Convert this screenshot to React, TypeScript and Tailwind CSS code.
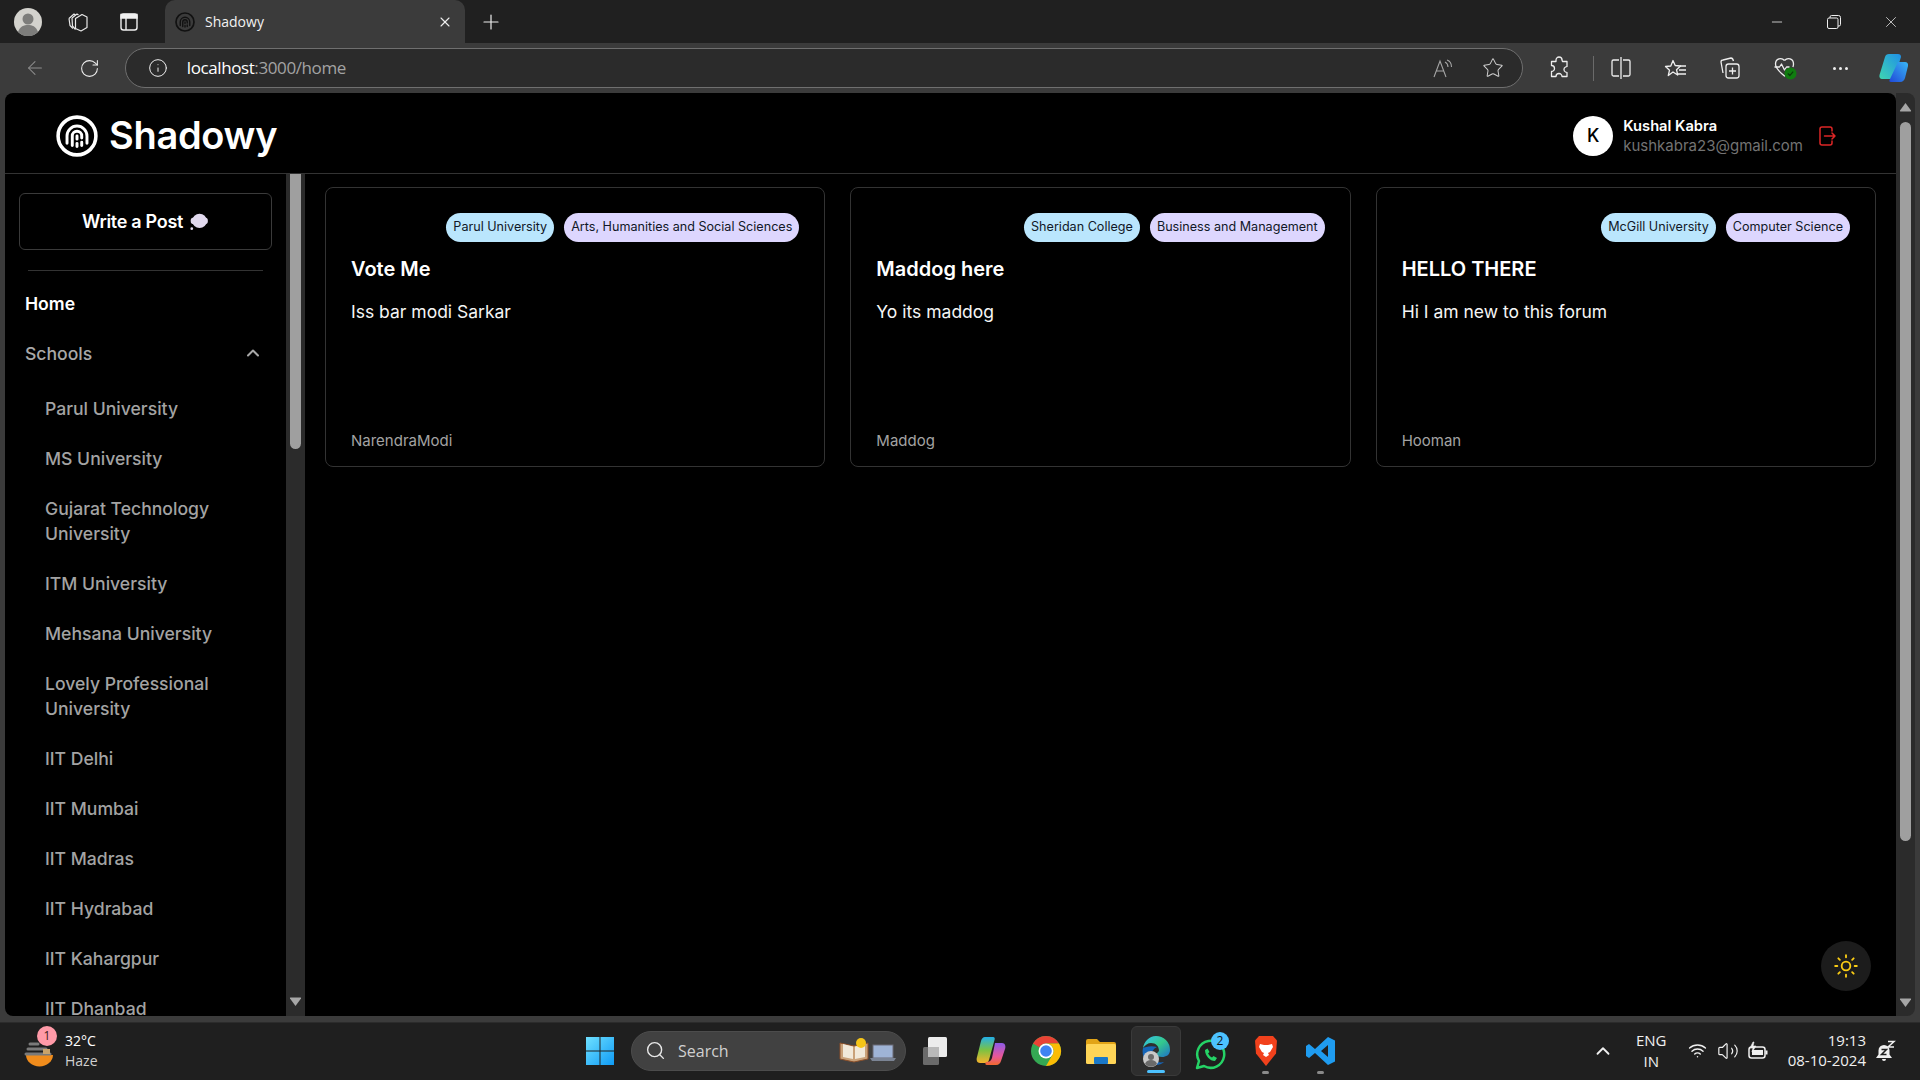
import { ArrowLeft, ChevronUp, Info, Minus, Plus, RotateCw, Search, Star, Sun, Volume2, Wifi, X } from "lucide-react";

const schools = [
  "Parul University",
  "MS University",
  "Gujarat Technology University",
  "ITM University",
  "Mehsana University",
  "Lovely Professional University",
  "IIT Delhi",
  "IIT Mumbai",
  "IIT Madras",
  "IIT Hydrabad",
  "IIT Kahargpur",
  "IIT Dhanbad",
];

const posts = [
  { school: "Parul University", field: "Arts, Humanities and Social Sciences", title: "Vote Me", body: "Iss bar modi Sarkar", author: "NarendraModi" },
  { school: "Sheridan College", field: "Business and Management", title: "Maddog here", body: "Yo its maddog", author: "Maddog" },
  { school: "McGill University", field: "Computer Science", title: "HELLO THERE", body: "Hi I am new to this forum", author: "Hooman" },
];

function Logo({ size, color }: { size: number; color: string }) {
  return (
    <svg width={size} height={size} viewBox="0 0 40 40" fill="none" stroke={color} strokeLinecap="round">
      <circle cx="20" cy="20" r="18" strokeWidth="3.4" />
      <path d="M10.500 27v-7a9.500 9.500 0 0 1 19 0v7" strokeWidth="2.800" />
      <path d="M15.500 29v-9a4.500 4.500 0 0 1 9 0v2M24.500 26v3" strokeWidth="2.800" />
      <path d="M20 20v3M20 27v3" strokeWidth="2.800" />
    </svg>
  );
}

function Avatar() {
  return (
    <svg width="28" height="28" viewBox="0 0 28 28">
      <circle cx="14" cy="14" r="14" fill="#d3d2cd" />
      <circle cx="14" cy="11" r="5.500" fill="#7d7d7b" />
      <path d="M4 24c2-6 6-7 10-7s8 1 10 7a14 14 0 0 1-20 0z" fill="#7d7d7b" />
    </svg>
  );
}

function TabBar() {
  return (
    <div className="h-[43px] shrink-0 bg-[#202020] flex items-end text-white">
      <div className="w-[56px] h-[43px] flex items-center justify-center">
        <Avatar />
      </div>
      <div className="w-[44px] h-[43px] flex items-center justify-center">
        <svg width="22" height="22" viewBox="0 0 22 22" fill="none" stroke="#e8e8e8" strokeWidth="1.200" strokeLinejoin="round">
          <path d="M2 7.500 7 3l1.500 1M2 7.500l1 7 3 3" />
          <path d="M5 7l5-4 1.500 1M5 7l.5 8 3 3.500" />
          <path d="M8.500 7.500 15 3.500l5 2.500v10.500L14 20l-5.500-2.500z" />
        </svg>
      </div>
      <div className="w-[54px] h-[43px] flex items-center justify-center mr-[9px] ml-[2px]">
        <svg width="20" height="20" viewBox="0 0 20 20" fill="none" stroke="#f0f0f0" strokeWidth="1.400">
          <rect x="2" y="2" width="16" height="16" rx="2.500" />
          <path d="M2 2.500h16v3.500H2z" fill="#f0f0f0" />
          <path d="M7 6v12" />
        </svg>
      </div>
      <div className="w-[300px] h-[43px] mt-auto bg-[#3b3b3b] rounded-t-[10px] flex items-center pl-[10px] pr-[12px]">
        <Logo size={20} color="#111" />
        <span className="ml-[10px] text-[14px] text-[#f2f2f2] font-['Open_Sans',sans-serif] flex-1">Shadowy</span>
        <X size={16} strokeWidth={1.600} className="text-[#eee]" />
      </div>
      <div className="w-[46px] h-[43px] flex items-center justify-center ml-[3px]">
        <Plus size={24} strokeWidth={1.200} className="text-[#eee]" />
      </div>
      <div className="flex-1" />
      <div className="flex items-center h-[43px] pr-[1px] text-[#eee]">
        <div className="w-[57px] flex justify-center"><Minus size={16} strokeWidth={1.200} /></div>
        <div className="w-[57px] flex justify-center">
          <svg width="14" height="14" viewBox="0 0 14 14" fill="none" stroke="#eee" strokeWidth="1">
            <rect x="0.500" y="3" width="10.500" height="10.500" rx="1.500" />
            <path d="M3 3V2a1.500 1.500 0 0 1 1.500-1.500h7A2 2 0 0 1 13.500 2.500v7A1.500 1.500 0 0 1 12 11h-1" />
          </svg>
        </div>
        <div className="w-[57px] flex justify-center"><X size={18} strokeWidth={1} /></div>
      </div>
    </div>
  );
}

function Toolbar() {
  return (
    <div className="h-[50px] shrink-0 bg-[#3b3b3b] flex items-center text-[#ededed]">
      <div className="w-[70px] flex justify-center"><ArrowLeft size={22} strokeWidth={1.100} className="text-[#8f8f8f]" /></div>
      <div className="w-[50px] flex justify-center -ml-[5px]"><RotateCw size={21} strokeWidth={1.200} /></div>
      <div className="ml-[10px] w-[1401px] h-[40px] rounded-full bg-[#2b2b2b] border border-[#6f6f6f] flex items-center pl-[22px] pr-[18px]">
        <Info size={20} strokeWidth={1.200} className="text-[#eee]" />
        <span className="ml-[19px] text-[17px] font-['Open_Sans',sans-serif] tracking-[-0.4px] text-white">
          localhost<span className="text-[#a3a3a3]">:3000/home</span>
        </span>
        <div className="flex-1" />
        <svg width="22" height="22" viewBox="0 0 22 22" fill="none" stroke="#a5a5a5" strokeWidth="1.100">
          <path d="M2 20 8 4l6 16M4 14h8" />
          <path d="M13 5c2 1 3 3 3 5M15 3c3 1 4.500 4 4.500 7" />
        </svg>
        <Star size={22} strokeWidth={1.100} className="ml-[28px] text-[#cfcfcf]" />
      </div>
      <div className="w-[68px] flex justify-center ml-[2px]">
        <svg width="22" height="24" viewBox="0 0 22 24" fill="none" stroke="#eee" strokeWidth="1.300" strokeLinejoin="round">
          <path d="M8 4a3 3 0 0 1 6 0l.5 1.500H19v5l-1.500.5a2.800 2.800 0 0 0 0 5l1.500.5v4h-5a3 3 0 0 0-6 0H3.500v-5a3 3 0 0 0 0-6V5.500H8z" />
        </svg>
      </div>
      <div className="w-[1px] h-[25px] bg-[#6a6a6a]" />
      <div className="w-[55px] flex justify-center">
        <svg width="22" height="24" viewBox="0 0 22 24" fill="none" stroke="#eee" strokeWidth="1.300">
          <path d="M11 1v22M9 4H3.500A1.500 1.500 0 0 0 2 5.500v13A1.500 1.500 0 0 0 3.500 20H9M13 4h5.500A1.500 1.500 0 0 1 20 5.500v13a1.500 1.500 0 0 1-1.500 1.500H13" />
        </svg>
      </div>
      <div className="w-[54px] flex justify-center">
        <svg width="24" height="24" viewBox="0 0 24 24" fill="none" stroke="#eee" strokeWidth="1.300" strokeLinejoin="round">
          <path d="M9 2.500l2.200 5 5.300.5-4 3.700 1.200 5.300L9 14l-4.700 3.500 1.200-5.300-4-3.700 5.300-.5z" transform="translate(0 2)" />
          <path d="M16 10h6M15 14h7M14 18h8" />
        </svg>
      </div>
      <div className="w-[56px] flex justify-center">
        <svg width="24" height="24" viewBox="0 0 24 24" fill="none" stroke="#eee" strokeWidth="1.300" strokeLinejoin="round">
          <path d="M5 17 3 6a2 2 0 0 1 2-2l8-2c1.500 0 2 1 2.500 3" />
          <rect x="8" y="8" width="13" height="14" rx="2.500" />
          <path d="M14.500 11.500v7M11 15h7" />
        </svg>
      </div>
      <div className="w-[54px] flex justify-center">
        <svg width="26" height="26" viewBox="0 0 26 26" fill="none" stroke="#eee" strokeWidth="1.300" strokeLinejoin="round">
          <path d="M12.500 5.500c-3-3.500-9-2-9 3.500 0 4 4 8 9 12 1-.8 2-1.500 3-2.500" />
          <path d="M12.500 5.500c3-3.500 9-2 9 3.500 0 1-.2 2-.6 3" />
          <path d="M2.500 12h5l2-3 3 6 2-3h3" />
          <circle cx="18.500" cy="18.500" r="6" fill="#107c10" stroke="none" />
          <path d="m15.800 18.500 2 2 3.400-3.800" stroke="#0b3d0b" strokeWidth="1.200" />
        </svg>
      </div>
      <div className="w-[56px] flex justify-center gap-[3px]">
        <span className="w-[3px] h-[3px] rounded-full bg-[#eee]" />
        <span className="w-[3px] h-[3px] rounded-full bg-[#eee]" />
        <span className="w-[3px] h-[3px] rounded-full bg-[#eee]" />
      </div>
      <div className="w-[52px] flex justify-center">
        <svg width="30" height="30" viewBox="0 0 30 30">
          <defs>
            <linearGradient id="cp1" x1="0" y1="1" x2="1" y2="0">
              <stop offset="0" stopColor="#3fd6b0" />
              <stop offset="1" stopColor="#1f8fe8" />
            </linearGradient>
            <linearGradient id="cp2" x1="0" y1="1" x2="1" y2="0">
              <stop offset="0" stopColor="#1f48d8" />
              <stop offset="1" stopColor="#39b7f4" />
            </linearGradient>
          </defs>
          <path d="M10 1h9c2 0 3 1 3 3l-6 19c-.6 2-2 3-4 3H3c-2 0-3-2-2.500-4L6 4c.5-2 2-3 4-3z" fill="url(#cp1)" />
          <path d="M19 9h7c2 0 3.500 1.500 3 4l-3 12c-.6 2-2 4-5 4h-9c-2 0-2-1-1-3z" fill="url(#cp2)" />
        </svg>
      </div>
    </div>
  );
}

function Arrow({ down }: { down?: boolean }) {
  return (
    <svg width="13" height="10" viewBox="0 0 13 10" className={down ? "rotate-180" : ""}>
      <path d="M6.500 1 12 8.500a.6.6 0 0 1-.5.9h-10a.6.6 0 0 1-.5-.9z" fill="#a6a6a6" />
    </svg>
  );
}

function Sidebar() {
  return (
    <aside className="w-[300px] shrink-0 flex overflow-hidden">
      <div className="w-[281px] shrink-0 px-[14px] pt-[19px] overflow-hidden">
        <button className="w-[253px] h-[57px] border border-[#3a3a3a] rounded-md flex items-center justify-center gap-[6px] text-[18px] font-semibold text-white tracking-[-0.3px]">
          Write a Post
          <svg width="20" height="20" viewBox="0 0 18 18" fill="#e1d9ee">
            <circle cx="9.500" cy="8" r="6.500" />
            <circle cx="4.500" cy="8" r="3" />
            <circle cx="14" cy="8" r="3" />
            <circle cx="2.500" cy="15" r="1.200" />
          </svg>
        </button>
        <div className="mx-[9px] mt-[20px] h-[1px] bg-[#333]" />
        <div className="px-[6px] pt-[20px] text-white font-semibold text-[17.6px] leading-[25px]">Home</div>
        <div className="pl-[6px] pr-[9px] mt-[25px] flex items-center justify-between text-[#a8a8a8] text-[17.6px] font-medium leading-[25px]">
          Schools
          <ChevronUp size={20} strokeWidth={2.400} className="text-[#a8a8a8] -mt-[1px]" />
        </div>
        <ul className="mt-[17px] pl-[26px] pr-[20px] text-[17.6px] font-medium text-[#a3a3a3] leading-[25px]">
          {schools.map((s) => (
            <li key={s} className="py-[12.5px]">{s}</li>
          ))}
        </ul>
      </div>
      <div className="w-[19px] shrink-0 bg-[#2b2b2b] flex flex-col items-center relative">
        <div className="w-[11px] h-[275px] bg-[#9f9f9f] rounded-b-full" />
        <div className="mt-auto mb-[9px]"><Arrow down /></div>
      </div>
    </aside>
  );
}

function PostCard({ school, field, title, body, author }: (typeof posts)[number]) {
  return (
    <div className="h-[280px] border border-[#333] rounded-lg pl-[25px] pr-[25px] pt-[25px] pb-[13px] flex flex-col">
      <div className="flex justify-end gap-[10px] text-[12.6px] font-normal text-[#111827] leading-[28px] whitespace-nowrap">
        <span className="h-[29px] px-[7px] rounded-full bg-[#bae6fd]">{school}</span>
        <span className="h-[29px] px-[7px] rounded-full bg-[#ddd6fe]">{field}</span>
      </div>
      <h2 className="mt-[12px] text-[20px] font-semibold leading-[30px] text-white">{title}</h2>
      <p className="mt-[14px] text-[17.5px] leading-[27px] text-[#f5f5f5]">{body}</p>
      <p className="mt-auto text-[15px] leading-[24px] text-[#a3a3a3]">{author}</p>
    </div>
  );
}

function Page() {
  return (
    <div className="flex-1 min-h-0 px-[5px] flex">
      <div className="flex-1 min-w-0 bg-black rounded-t-lg rounded-bl-lg flex flex-col font-['Inter',sans-serif] relative overflow-hidden">
        <header className="h-[81px] shrink-0 border-b border-[#333] flex items-center pt-[5px] pl-[51px] pr-[59px]">
          <Logo size={42} color="#fff" />
          <span className="ml-[11px] text-[38px] font-semibold text-white tracking-[-0.3px]">Shadowy</span>
          <div className="flex-1" />
          <div className="w-[40px] h-[40px] rounded-full bg-white text-black flex items-center justify-center text-[18px] font-medium">K</div>
          <div className="ml-[10px] flex flex-col">
            <span className="text-[14.7px] leading-[20px] font-semibold text-white">Kushal Kabra</span>
            <span className="text-[15px] leading-[20px] text-[#737373]">kushkabra23@gmail.com</span>
          </div>
          <svg className="ml-[16px]" width="18" height="20" viewBox="0 0 18 20" fill="none" stroke="#dc2626" strokeWidth="1.500" strokeLinecap="round" strokeLinejoin="round">
            <path d="M13 5V3a2 2 0 0 0-2-2H3a2 2 0 0 0-2 2v14a2 2 0 0 0 2 2h8a2 2 0 0 0 2-2v-2" />
            <path d="M5.500 10H16M13 7l3 3-3 3" />
          </svg>
        </header>
        <div className="flex-1 min-h-0 flex">
          <Sidebar />
          <main className="flex-1 min-w-0 px-[20px] pt-[13px] grid grid-cols-3 gap-[25px] content-start">
            {posts.map((p) => (
              <PostCard key={p.title} {...p} />
            ))}
          </main>
        </div>
        <button className="absolute right-[25px] bottom-[25px] w-[50px] h-[50px] rounded-full bg-[#1c1c1c] flex items-center justify-center">
          <Sun size={26} strokeWidth={1.700} className="text-[#facc15]" />
        </button>
      </div>
      <div className="w-[19px] shrink-0 bg-[#2b2b2b] rounded-r-lg flex flex-col items-center pt-[9px] pb-[8px]">
        <Arrow />
        <div className="mt-[10px] w-[11px] h-[719px] bg-[#9f9f9f] rounded-full" />
        <div className="mt-auto"><Arrow down /></div>
      </div>
    </div>
  );
}

function TaskIcon({ children, active, dot }: { children: React.ReactNode; active?: boolean; dot?: boolean }) {
  return (
    <div className={`relative w-[50px] h-[50px] mx-[2.5px] rounded-md flex items-center justify-center ${active ? "bg-[#2e2e2e] border border-[#3a3a3a]" : ""}`}>
      {children}
      {active && <span className="absolute bottom-[2px] left-[15px] w-[18px] h-[3px] rounded-full bg-[#4cc2ff]" />}
      {dot && <span className="absolute bottom-[2px] left-[21px] w-[7px] h-[3px] rounded-full bg-[#8a8a8a]" />}
    </div>
  );
}

function Taskbar() {
  return (
    <div className="h-[58px] mt-[6px] shrink-0 bg-[#1f1f1f] border-t border-[#2b2b2b] flex items-center pb-[2px] font-['Open_Sans',sans-serif] text-white">
      <div className="w-[560px] flex items-center pl-[24px] shrink-0">
        <div className="relative w-[32px] h-[32px]">
          <svg width="32" height="32" viewBox="0 0 32 32" className="mt-[1px]">
            <path d="M2 19h27a13 11 0 0 1-27 0z" fill="#f08c1c" />
            <path d="M6 8h8M4 13h18M2 18h24" stroke="#7a7a7a" strokeWidth="3" strokeLinecap="round" />
            <rect x="19" y="13" width="7" height="5" fill="#c9a36a" />
          </svg>
          <span className="absolute -top-[9px] left-[13px] w-[20px] h-[20px] rounded-full bg-[#ff9aa8] text-[#3a1a1a] text-[12px] flex items-center justify-center">1</span>
        </div>
        <div className="ml-[9px] text-[14px] leading-[20px] whitespace-nowrap">
          <div className="text-[14px]">32°C</div>
          <div className="text-[14px] text-[#d0d0d0]">Haze</div>
        </div>
      </div>
      <div className="w-[30px] ml-[25px] mr-[24px] shrink-0">
        <svg width="30" height="30" viewBox="0 0 30 30">
          <defs>
            <linearGradient id="win" x1="0" y1="0" x2="1" y2="1">
              <stop offset="0" stopColor="#6fe0ff" />
              <stop offset="1" stopColor="#0f9bf5" />
            </linearGradient>
          </defs>
          <path d="M1 1h13.500v13.500H1zM15.500 1H29v13.500H15.500zM1 15.500h13.500V29H1zM15.500 15.500H29V29H15.500z" fill="url(#win)" />
        </svg>
      </div>
      <div className="-ml-[8px] w-[275px] h-[40px] shrink-0 rounded-full bg-[#414141] border border-[#4c4c4c] flex items-center pl-[13px]">
        <Search size={21} strokeWidth={1.600} className="text-[#e8e8e8]" />
        <span className="ml-[12px] text-[16px] text-[#d0d0d0]">Search</span>
        <svg className="ml-auto mr-[8px]" width="58" height="26" viewBox="0 0 58 26">
          <path d="M1 5l14 3 14-3v16l-14 3-14-3z" fill="#c9a27a" stroke="#8a4f2a" />
          <path d="M4 6l10 2.500V21L4 19zM16 8.500 26 6v13l-10 2z" fill="#f1e9da" />
          <circle cx="22" cy="5" r="5" fill="#f5c518" />
          <rect x="34" y="7" width="20" height="13" fill="#9fb4d6" stroke="#6b6b76" />
          <path d="M31 20h26l-2 3H33z" fill="#7b8494" />
        </svg>
      </div>
      <div className="flex items-center ml-[2.5px]">
        <TaskIcon>
          <svg width="32" height="32" viewBox="0 0 32 32">
            <rect x="8" y="2" width="19" height="20" rx="1.500" fill="#ececec" />
            <rect x="3" y="12" width="16" height="18" rx="1.500" fill="#6a6a6a" />
            <rect x="8" y="12" width="11" height="10" fill="#b9b9b9" />
          </svg>
        </TaskIcon>
        <TaskIcon>
          <svg width="30" height="32" viewBox="0 0 30 32">
            <defs>
              <linearGradient id="tc1" x1="0" y1="0" x2="0" y2="1">
                <stop offset="0" stopColor="#23b0e8" />
                <stop offset="0.5" stopColor="#7cc242" />
                <stop offset="1" stopColor="#f7b32b" />
              </linearGradient>
              <linearGradient id="tc2" x1="0" y1="0" x2="0" y2="1">
                <stop offset="0" stopColor="#8d5be8" />
                <stop offset="0.6" stopColor="#e8579a" />
                <stop offset="1" stopColor="#f26a2e" />
              </linearGradient>
            </defs>
            <path d="M9 2h8c2 0 2 2 1.500 3L13 25c-.5 2-2 3-4 3H4c-3 0-4-3-3-6L5 6c.5-2 2-4 4-4z" fill="url(#tc1)" />
            <path d="M19 8h7c3 0 4 3 3 6l-4 12c-.6 2-2 4-5 4H11c-2 0-2-2-1-3 3 0 5-1 6-4z" fill="url(#tc2)" />
          </svg>
        </TaskIcon>
        <TaskIcon>
          <svg width="32" height="32" viewBox="0 0 32 32">
            <circle cx="16" cy="16" r="15" fill="#34a853" />
            <path d="M16 1a15 15 0 0 1 13 7.500H16a7.500 7.500 0 0 0-6.500 3.750L3 8.500A15 15 0 0 1 16 1z" fill="#ea4335" />
            <path d="M29 8.500A15 15 0 0 1 16 31l6.500-11.250A7.500 7.500 0 0 0 16 8.500z" fill="#fbbc05" />
            <circle cx="16" cy="16" r="7.500" fill="#fff" />
            <circle cx="16" cy="16" r="5.800" fill="#3f83f1" />
          </svg>
        </TaskIcon>
        <TaskIcon>
          <svg width="30" height="30" viewBox="0 0 30 30">
            <path d="M0 5a2 2 0 0 1 2-2h9l3 3h14a2 2 0 0 1 2 2v3H0z" fill="#e2a417" />
            <rect x="0" y="8" width="30" height="20" rx="1.500" fill="#ffd557" />
            <rect x="8" y="21" width="14" height="7" rx="1" fill="#1a78c8" />
          </svg>
        </TaskIcon>
        <TaskIcon active>
          <svg width="30" height="34" viewBox="0 0 30 34">
            <defs>
              <linearGradient id="ed" x1="0" y1="0" x2="1" y2="1">
                <stop offset="0" stopColor="#35c1f1" />
                <stop offset="0.5" stopColor="#34c98c" />
                <stop offset="1" stopColor="#1e6fc9" />
              </linearGradient>
            </defs>
            <path d="M15 2a14 14 0 0 1 14 14c0 5-4 7-8 7-3 0-5-1-5-3 0-1 1-2 2-3 0-5-3-8-8-8-3 0-6 2-8 5C3 8 8 2 15 2z" fill="url(#ed)" />
            <path d="M2 14c-2 8 3 17 13 17 3 0 6-1 8-3-7 2-13-3-12-8 0-4 3-6 5-7-6-2-12 0-14 1z" fill="#1565b8" />
            <circle cx="10" cy="25" r="8" fill="#c9c9c9" />
            <circle cx="10" cy="23" r="3" fill="#6a6a6a" />
            <path d="M4 30c1-3 3-4 6-4s5 1 6 4a8 8 0 0 1-12 0z" fill="#6a6a6a" />
          </svg>
        </TaskIcon>
        <TaskIcon>
          <svg width="36" height="38" viewBox="0 0 36 38" fill="none">
            <path d="M4 33l2-7A13.500 13.500 0 1 1 11 31z" stroke="#25d366" strokeWidth="2.500" strokeLinejoin="round" transform="translate(0 3)" />
            <path d="M12 15c0 6 5 11 10 11l2-3-3.500-2-1.500 1.500c-2-1-3-2.500-4-4l1.500-1.500-2-3.500z" fill="#25d366" transform="translate(0 3)" />
            <circle cx="27" cy="9" r="9" fill="#4cc2ff" />
            <text x="27" y="13" textAnchor="middle" fontSize="12" fill="#111">2</text>
          </svg>
        </TaskIcon>
        <TaskIcon dot>
          <svg width="26" height="32" viewBox="0 0 26 32">
            <path d="M6 1h14l4 4.500-1 13L13 31 3 18.500 2 5.500z" fill="#f1411c" />
            <path d="M7 9l4 1h4l4-1 1 3-3 5-2 1 1 2-3 2-3-2 1-2-2-1-3-5z" fill="#fff" />
          </svg>
        </TaskIcon>
        <TaskIcon dot>
          <svg width="30" height="30" viewBox="0 0 30 30">
            <path d="M22 1 29 4.500v21L22 29 9 17l-6 5-3-2v-10l3-2 6 5zM22 9l-7 6 7 6z" fill="#1f9cf0" fillRule="evenodd" />
          </svg>
        </TaskIcon>
      </div>
      <div className="flex-1" />
      <div className="flex items-center pr-[24px] text-[#f0f0f0]">
        <ChevronUp size={22} strokeWidth={2} />
        <div className="ml-[15px] w-[44px] text-center text-[15px] leading-[21px]">ENG<br />IN</div>
        <Wifi size={19} strokeWidth={1.800} className="ml-[15px]" />
        <Volume2 size={22} strokeWidth={1.300} className="ml-[10px]" />
        <svg className="ml-[8px]" width="22" height="20" viewBox="0 0 22 20" fill="none" stroke="#f0f0f0">
          <rect x="2" y="6" width="16" height="11" rx="2.500" strokeWidth="1.500" />
          <rect x="5" y="9" width="11" height="5" fill="#f0f0f0" stroke="none" />
          <path d="M19.500 9.500v4" strokeWidth="2" />
          <path d="M6 1 3 7h3l-1 4 4-6H6l1-4z" fill="#f0f0f0" strokeWidth=".6" />
        </svg>
        <div className="ml-[18.5px] -mt-[1px] text-right text-[15px] leading-[20px] whitespace-nowrap">
          <div>19:13</div>
          <div>08-10-2024</div>
        </div>
        <svg className="ml-[10px]" width="20" height="22" viewBox="0 0 20 22" fill="#f0f0f0">
          <path d="M8 5a5.500 5.500 0 0 0-5.500 5.500v4L0 18h16l-2.500-3.500v-4A5.500 5.500 0 0 0 8 5z" />
          <path d="M6 19a2 2 0 0 0 4 0z" />
          <path d="M5.500 9.500h5l-5 5h5" fill="none" stroke="#1f1f1f" strokeWidth="1.500" />
          <path d="M12 1.500h6l-6 5.500h6" fill="none" stroke="#f0f0f0" strokeWidth="1.500" />
        </svg>
      </div>
    </div>
  );
}

export default function App() {
  return (
    <div className="h-screen w-screen overflow-hidden bg-[#3b3b3b] flex flex-col">
      <TabBar />
      <Toolbar />
      <Page />
      <Taskbar />
    </div>
  );
}
